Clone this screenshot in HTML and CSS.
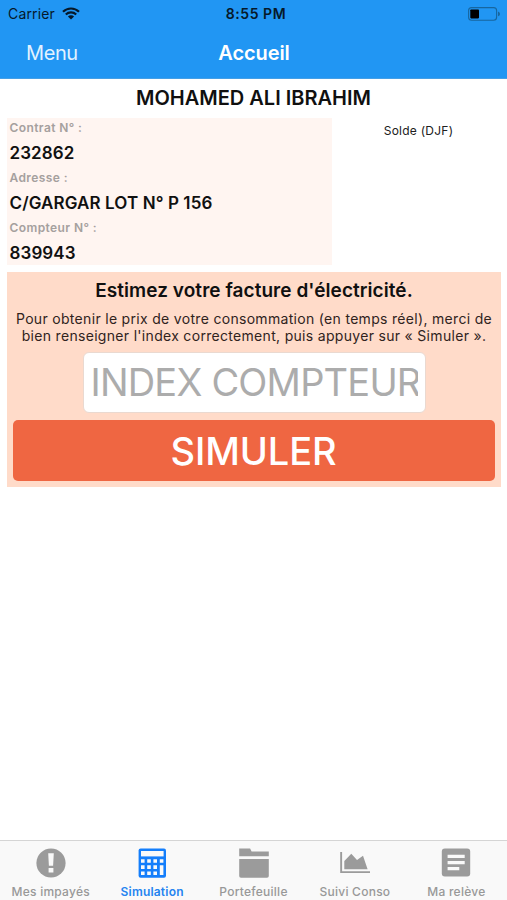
FILE: index.html
```
<!DOCTYPE html>
<html lang="fr">
<head>
  <meta charset="UTF-8" />
  <title>Accueil</title>
  <meta name="viewport" content="width=device-width, initial-scale=1.0" />
  <link rel="stylesheet" href="styles.css">
</head>
<body>

  <header>
    <div class="status-bar">
      <div class="carrier">
        <span>Carrier</span>
        <svg width="18" height="13" viewBox="0 0 18 13">
          <path d="M1 4.7a11.6 11.6 0 0 1 16 0M3.8 7.5a7.6 7.6 0 0 1 10.4 0" fill="none" stroke="#06192a" stroke-width="2.2"/>
          <path d="M9 12.6L5.9 9.5a4.4 4.4 0 0 1 6.2 0z" fill="#06192a"/>
        </svg>
      </div>
      <span class="clock">8:55 PM</span>
      <svg class="battery" width="32" height="14" viewBox="0 0 32 14">
        <rect x=".6" y=".6" width="28" height="12.6" rx="3" fill="none" stroke="#17669f" stroke-width="1.1"/>
        <rect x="2.3" y="2.4" width="8.7" height="9" rx=".8" fill="#000"/>
        <path d="M30 4.6q2 .6 2 2.3t-2 2.3z" fill="#17669f"/>
      </svg>
    </div>
    <div class="nav-bar">
      <span class="menu">Menu</span>
      <span class="nav-title">Accueil</span>
    </div>
  </header>

  <main>
    <h1>MOHAMED ALI IBRAHIM</h1>

    <div class="account">
      <dl class="details">
        <dt>Contrat N° :</dt>
        <dd>232862</dd>
        <dt>Adresse :</dt>
        <dd>C/GARGAR LOT N° P 156</dd>
        <dt>Compteur N° :</dt>
        <dd>839943</dd>
      </dl>
      <div class="balance">Solde (DJF)</div>
    </div>

    <section class="estimate">
      <h2>Estimez votre facture d'électricité.</h2>
      <p>Pour obtenir le prix de votre consommation (en temps réel), merci de<br>bien renseigner l'index correctement, puis appuyer sur « Simuler ».</p>
      <div class="index-field"><div class="placeholder">INDEX COMPTEUR</div></div>
      <button class="simulate">SIMULER</button>
    </section>
  </main>

  <nav class="tab-bar">
    <div class="tab">
      <svg width="30" height="30" viewBox="0 0 30 30">
        <circle cx="15" cy="15" r="14.6" fill="#9b9b9b"/>
        <path d="M12.2 5.2h5.6l-.7 12.6h-4.2zM12.6 20h4.8v4.6h-4.8z" fill="#f9f9f9"/>
      </svg>
      <span>Mes impayés</span>
    </div>
    <div class="tab active">
      <svg width="30" height="30" viewBox="0 0 30 30">
        <rect x="1.6" y=".4" width="27.4" height="29.4" rx="2" fill="#147efb"/>
        <path d="M4 3h22.600v5.400H4z" fill="#f9f9f9"/>
        <path d="M4 11.200h3.600v3.600H4zM10.200 11.200h3.600v3.600h-3.600zM16.400 11.200h3.600v3.600h-3.600zM22.800 11.200h3.600v3.600h-3.600zM4 17.300h3.600v3.600H4zM10.200 17.300h3.600v3.600h-3.600zM16.400 17.300h3.600v3.600h-3.600zM4 23.400h3.600v3.600H4zM10.200 23.400h3.600v3.600h-3.600zM16.400 23.400h3.600v3.600h-3.600zM22.800 17.300h3.600v9.700h-3.600z" fill="#f9f9f9"/>
      </svg>
      <span>Simulation</span>
    </div>
    <div class="tab">
      <svg width="30" height="30" viewBox="0 0 30 30" fill="#9b9b9b">
        <path d="M.2.6h10.9l1.5 3h17.2v4.6H.2zM.2 11h29.6v17q0 1.8-1.8 1.8H2Q.2 29.8.2 28z"/>
      </svg>
      <span>Portefeuille</span>
    </div>
    <div class="tab">
      <svg width="30" height="30" viewBox="0 0 30 30" fill="#9b9b9b">
        <path d="M.2 4h1.9v19.2H30V25H.2zM4.3 21.300v-8.400l7-7.200 5.700 6.200 6-4.100 4.600 13.500z"/>
      </svg>
      <span>Suivi Conso</span>
    </div>
    <div class="tab">
      <svg width="30" height="30" viewBox="0 0 30 30">
        <rect x=".8" y=".6" width="28.4" height="28" rx="3" fill="#9b9b9b"/>
        <path d="M6.6 6.7h17.1v3.4H6.6zM6.6 12.9h17.1v3.3H6.6zM6.6 19h11.7v3.3H6.6z" fill="#f9f9f9"/>
      </svg>
      <span>Ma relève</span>
    </div>
  </nav>

</body>
</html>
```
FILE: styles.css
```
* {
  box-sizing: border-box;
}

body {
  font-family: Inter, "Liberation Sans", sans-serif;
  background: #fff;
  color: #101010;
  margin: 0;
  height: 900px;
  display: flex;
  flex-direction: column;
  overflow: hidden;
}

/* --- Header --- */
header {
  background: #2196f3;
  height: 79px;
  border-bottom: 1px solid #459fe6;
}
.status-bar,
.nav-bar {
  display: grid;
  grid-template-columns: 1fr auto 1fr;
  align-items: center;
}
.status-bar {
  height: 27px;
  padding: 0 7px 0 8px;
  color: #06192a;
}
.carrier {
  display: flex;
  align-items: center;
  gap: 7px;
  font-size: 14px;
  letter-spacing: 0.15px;
}
.clock {
  padding-left: 4px;
  font-size: 14px;
  font-weight: 600;
  letter-spacing: 0.55px;
}
.battery {
  justify-self: end;
}
.nav-bar {
  height: 51px;
  padding: 0 25px 0 26px;
  color: #fff;
  font-size: 20px;
}
.menu {
  color: #e2f2ff;
  letter-spacing: -0.4px;
}
.nav-title {
  font-weight: 600;
  letter-spacing: -0.1px;
}

/* --- Account --- */
h1 {
  height: 39px;
  margin: 0;
  text-align: center;
  font-size: 20px;
  font-weight: 600;
  line-height: 38px;
  letter-spacing: 0;
}
.account {
  display: flex;
  padding-left: 7px;
  height: 147px;
}
.details {
  width: 325px;
  margin: 0;
  padding-left: 2.5px;
  background: #fff5f1;
}
dt {
  height: 20px;
  line-height: 20px;
  font-size: 12px;
  font-weight: 600;
  letter-spacing: 0.4px;
  color: #a5a09e;
}
dd {
  height: 30px;
  line-height: 30px;
  margin: 0;
  font-size: 17px;
  font-weight: 600;
  letter-spacing: 0.1px;
}
.balance {
  flex: 1;
  padding: 5px 2px 0 0;
  text-align: center;
  font-size: 12px;
  line-height: 16px;
  letter-spacing: 0.25px;
  color: #202020;
}

/* --- Estimate --- */
.estimate {
  height: 215px;
  margin: 7px 6px 0 7px;
  padding: 6px 6px 6px;
  background: #ffdbc9;
  display: flex;
  flex-direction: column;
  align-items: center;
}
h2 {
  margin: 0;
  font-size: 19px;
  font-weight: 600;
  line-height: 26px;
  letter-spacing: 0.06px;
}
p {
  margin: 6px 0 0;
  text-align: center;
  white-space: nowrap;
  font-size: 14px;
  line-height: 17px;
  letter-spacing: 0.31px;
  color: #30231d;
}
.index-field {
  width: 343px;
  height: 61px;
  margin-top: 8px;
  padding: 0 7px;
  border: 1px solid #ead9d0;
  border-radius: 6px;
  background: #fff;
}
.placeholder {
  overflow: hidden;
  white-space: nowrap;
  font-size: 38px;
  font-weight: 400;
  line-height: 59px;
  letter-spacing: -0.8px;
  color: #acacac;
}
.simulate {
  width: 100%;
  height: 61px;
  margin-top: 7px;
  padding: 0 1px 0 0;
  border: none;
  border-radius: 5px;
  background: #ef6642;
  color: #fff;
  font-family: inherit;
  font-size: 38px;
  font-weight: 500;
  letter-spacing: -0.1px;
}

/* --- Tab bar --- */
.tab-bar {
  margin-top: auto;
  height: 60px;
  display: flex;
  background: #f9f9f9;
  border-top: 1px solid #d5d5d5;
}
.tab {
  flex: 1;
  padding-top: 7px;
  display: flex;
  flex-direction: column;
  align-items: center;
  gap: 6px;
  font-size: 12px;
  font-weight: 500;
  line-height: 16px;
  letter-spacing: 0.25px;
  color: #989898;
}
.tab.active {
  color: #2584f0;
  font-weight: 600;
  letter-spacing: 0.2px;
}
```
